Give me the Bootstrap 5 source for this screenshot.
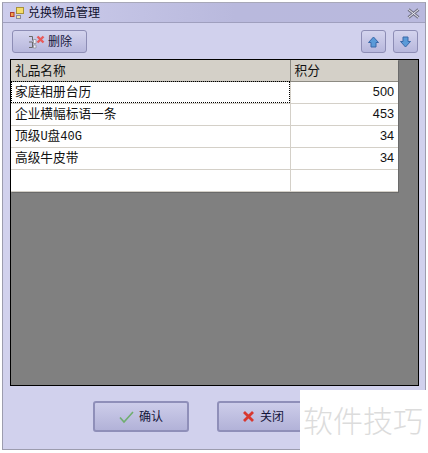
<!DOCTYPE html>
<html lang="zh">
<head>
<meta charset="utf-8">
<title>兑换物品管理</title>
<link rel="stylesheet" href="https://cdn.jsdelivr.net/npm/bootstrap@5.3.0/dist/css/bootstrap.min.css">
<style>
html,body{height:453px;overflow:hidden;background:#fff;margin:0}
body{padding:2px 2px 3px 2px;font-family:"Liberation Sans","Noto Sans CJK SC",sans-serif;font-size:12px;color:#111}
.frame-win{position:relative;width:424px;height:448px;border:1px solid #9c9cae;border-top-color:#a8a8b8;background:#d1d1ed}
.title-strip{height:20px;padding:1px 5px 0 5px;gap:3px;background:linear-gradient(to right,#cdcdec,#b9b9dd 55%,#b9b9de);border-bottom:1px solid #9f9fbe;color:#10102e;font-size:12px;line-height:18px}
.tool-strip{height:36px;padding:7px 7px 0 9px}
.skin-btn{display:inline-flex;align-items:center;justify-content:center;padding:0;border:1px solid #8d8db5;border-radius:3px;background:linear-gradient(to bottom,#d4d4ee,#b7b7dc);color:#15153a;font-size:12px;line-height:1}
.btn-del{width:75px;height:23px;gap:3px;padding-left:1px}
.btn-arrow{width:25px;height:23px}
.arrow-pair{gap:7px}
.grid-host{width:409px;height:327px;margin-left:7px;background:#808080;border:1px solid #000}
.grid-table{width:387px;margin:0;table-layout:fixed;border-collapse:collapse;font-family:"Liberation Sans","Noto Sans CJK SC",sans-serif;font-size:12.7px;box-shadow:1px 1px 0 #6a6a6a}
.grid-table th,.grid-table td{height:22px;padding:1px 4px 0;font-weight:400;color:#111;line-height:19px;border:0;border-right:1px solid #d4d0c8;border-bottom:1px solid #d4d0c8;background:#fff;box-shadow:none;vertical-align:middle}
.grid-table th{height:21px;line-height:18px;background:#d4d0c8;border-right:1px solid #8c8a82;border-bottom:1px solid #8c8a82}
.grid-table th:last-child,.grid-table td:last-child{border-right:0}
.grid-table td.cell-focus{outline:1px dotted #000;outline-offset:-1px}
.latin-run{font-family:"Liberation Mono",monospace;font-size:12px}
.col-name{width:279px}
.foot-strip{height:62px;padding:15px 0 0 90px;gap:28px}
.btn-foot{width:96px;height:31px;gap:5px;border:2px solid #8f8fb9;background:linear-gradient(to bottom,#cdcdea,#b2b2d8);font-size:12px}
.btn-close-skin{padding-right:4px}
.stamp{position:absolute;left:297px;top:387px;width:129px;height:63px;background:#fff;color:#dcdcdc;font-size:30px;line-height:58px;padding-left:3px;white-space:nowrap;font-family:"Noto Sans CJK SC",sans-serif;font-weight:300}
</style>
</head>
<body>
<div class="frame-win d-flex flex-column">
  <div class="title-strip d-flex align-items-center">
    <svg width="17" height="14" viewBox="0 0 17 14"><rect x="2.500" y="6.500" width="3.500" height="4" fill="#f0a050" stroke="#b03a2a"/><rect x="8.500" y="1.500" width="7" height="6" fill="#f5dc6a" stroke="#a8923a"/><rect x="8.500" y="9.500" width="4" height="3" fill="#f0e6b0" stroke="#8a8a9a"/></svg>
    <span class="flex-grow-1">兑换物品管理</span>
    <svg width="13" height="11" viewBox="0 0 13 11"><path d="M1.500 1.500 11.500 9.500M11.500 1.500 1.500 9.500" stroke="#77778a" stroke-width="3"/><path d="M1.500 1.500 11.500 9.500M11.500 1.500 1.500 9.500" stroke="#eeeef6" stroke-width="1"/></svg>
  </div>
  <div class="tool-strip d-flex align-items-start">
    <button class="skin-btn btn-del" type="button">
      <svg width="17" height="14" viewBox="0 0 17 14"><path d="M1 1.500H4.500V5.500M1 7H4.500M1 12.500H4.500V7" stroke="#6a6a6a" fill="none"/><path d="M5.500 4.500H8V8.500H5.500ZM5.500 10H8V13H5.500Z" fill="#f4f4fa" stroke="#8a8a92" stroke-width=".7"/><path d="M9.500 1.500 15.500 7.500M15.500 1.500 9.500 7.500" stroke="#e85a5a" stroke-width="2.400"/></svg>
      <span>删除</span>
    </button>
    <div class="ms-auto d-flex arrow-pair">
      <button class="skin-btn btn-arrow" type="button" aria-label="上移">
        <svg width="11" height="12" viewBox="0 0 11 12"><path d="M5.500 1 10.500 6.500H8V11H3V6.500H.5Z" fill="#5a9ad8" stroke="#3a68a8"/></svg>
      </button>
      <button class="skin-btn btn-arrow" type="button" aria-label="下移">
        <svg width="11" height="12" viewBox="0 0 11 12"><path d="M5.500 11 10.500 5.500H8V1H3V5.500H.5Z" fill="#5a9ad8" stroke="#3a68a8"/></svg>
      </button>
    </div>
  </div>
  <div class="grid-host">
    <table class="table grid-table">
      <colgroup><col class="col-name"><col></colgroup>
      <thead><tr><th>礼品名称</th><th>积分</th></tr></thead>
      <tbody>
        <tr><td class="cell-focus">家庭相册台历</td><td class="text-end">500</td></tr>
        <tr><td>企业横幅标语一条</td><td class="text-end">453</td></tr>
        <tr><td>顶级<span class="latin-run">U</span>盘<span class="latin-run">40G</span></td><td class="text-end">34</td></tr>
        <tr><td>高级牛皮带</td><td class="text-end">34</td></tr>
        <tr><td>&nbsp;</td><td>&nbsp;</td></tr>
      </tbody>
    </table>
  </div>
  <div class="foot-strip d-flex align-items-start">
    <button class="skin-btn btn-foot" type="button">
      <svg width="15" height="14" viewBox="0 0 15 14"><path d="M1 7.500 5 12 14 2" fill="none" stroke="#6fae6f" stroke-width="1.600"/></svg>
      <span>确认</span>
    </button>
    <button class="skin-btn btn-foot btn-close-skin" type="button">
      <svg width="13" height="13" viewBox="0 0 13 13"><path d="M2 2 11 11M11 2 2 11" stroke="#d8372f" stroke-width="2.800"/></svg>
      <span>关闭</span>
    </button>
  </div>
  <div class="stamp">软件技巧</div>
</div>
<script src="https://cdn.jsdelivr.net/npm/bootstrap@5.3.0/dist/js/bootstrap.bundle.min.js"></script>
</body>
</html>
